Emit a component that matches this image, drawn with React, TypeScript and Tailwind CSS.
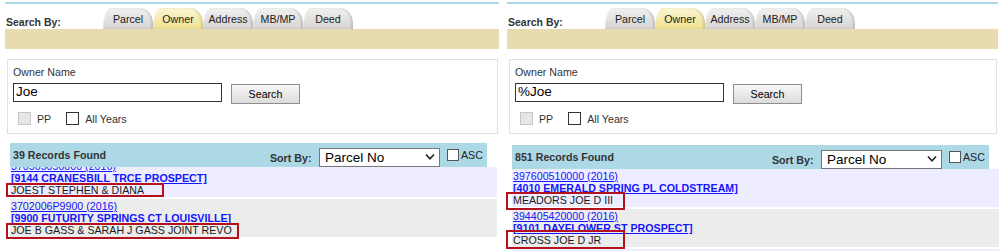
import React from 'react';

type Row = {
    parcel: string;
    address: string;
    owner: string;
    mark?: string;
};

const tabs = ['Parcel', 'Owner', 'Address', 'MB/MP', 'Deed'];

const leftRows: Row[] = [
    { parcel: '370505050000 (2016)', address: '[9144 CRANESBILL TRCE PROSPECT]', owner: 'JOEST STEPHEN & DIANA', mark: 'left-[-5px] top-[-1px] w-[158px] h-[14px]' },
    { parcel: '3702006P9900 (2016)', address: '[9900 FUTURITY SPRINGS CT LOUISVILLE]', owner: 'JOE B GASS & SARAH J GASS JOINT REVO', mark: 'left-[-5px] top-[-1px] w-[233px] h-[16px]' },
];

const rightRows: Row[] = [
    { parcel: '397600510000 (2016)', address: '[4010 EMERALD SPRING PL COLDSTREAM]', owner: 'MEADORS JOE D III', mark: 'left-[-7px] top-[-2px] w-[119px] h-[18px]' },
    { parcel: '394405420000 (2016)', address: '[9101 DAYFLOWER ST PROSPECT]', owner: 'CROSS JOE D JR', mark: 'left-[-7px] top-[-4px] w-[119px] h-[19px]' },
    { parcel: '394302170000 (2016)', address: '[9802 JOE RD LOUISVILLE]', owner: 'JOE SMITH' },
];

const Tab = ({ label, active }: { label: string; active: boolean }) => (
    <div
        className={
            'w-[50px] h-[21px] flex items-center justify-center text-[10.67px] text-[#222] rounded-tl-[8px_21px] rounded-tr-[13px_15px] shadow-[inset_-2px_0_2px_rgba(0,0,0,0.12)] ' +
            (active ? 'bg-linear-to-b from-[#fbf6d2] to-[#efe08f]' : 'bg-linear-to-b from-[#f1f1f0] to-[#d5d4d2]')
        }
    >
        {label}
    </div>
);

const ResultRow = ({ row, index }: { row: Row; index: number }) => (
    <div className={'pl-[1px] pt-[1px] pb-[1px] leading-[12px] text-[10.67px] border-b-2 border-white ' + (index % 2 === 0 ? 'bg-[#ededff]' : 'bg-[#ececec]')}>
        <div className="text-[#1515ff] underline whitespace-nowrap">{row.parcel}</div>
        <div className="text-[#1515ff] underline font-bold whitespace-nowrap">{row.address}</div>
        <div className="relative text-[#1a1a1a] whitespace-nowrap">
            {row.owner}
            {row.mark && <span className={'absolute border-2 border-[#b3121c] ' + row.mark} />}
        </div>
    </div>
);

const SearchPanel = ({
    width,
    query,
    count,
    rows,
    barGap,
    listClass,
    innerClass,
}: {
    width: string;
    query: string;
    count: string;
    rows: Row[];
    barGap: string;
    listClass: string;
    innerClass: string;
}) => (
    <div className={width}>
        <div className="mt-[2px] border-t-2 border-[#add8e6]" />

        {/* search by tabs */}
        <div className="flex items-end h-[25px]">
            <div className="w-[98px] pl-[1px] text-[10.5px] leading-[13px] font-bold text-[#333]">Search By:</div>
            {tabs.map((t) => (
                <Tab key={t} label={t} active={t === 'Owner'} />
            ))}
        </div>
        <div className="h-[20px] bg-[#e6dcb0]" />

        {/* owner form */}
        <div className="mt-[10px] ml-[2px] mr-[1px] border border-[#e2e2e2] pt-[6px] pl-[5px] pb-[8px] text-[10.67px] text-[#333]">
            <div className="leading-[12px]">Owner Name</div>
            <div className="flex items-start mt-[5px]">
                <input
                    defaultValue={query}
                    className="w-[209px] h-[19px] border border-[#333] px-[2px] text-[13.5px] text-black outline-none"
                />
                <button className="ml-[9px] mt-[1px] w-[69px] h-[20px] border border-[#8e8e8e] bg-linear-to-b from-[#f7f7f7] to-[#dcdcdc] text-[10.67px] text-black">
                    Search
                </button>
            </div>
            <div className="flex items-center mt-[8px] pl-[5px] h-[13px]">
                <input type="checkbox" disabled className="appearance-none m-0 w-[13px] h-[13px] border border-[#c6c6c6] bg-[#e6e6e6]" />
                <span className="ml-[6px]">PP</span>
                <input type="checkbox" className="appearance-none m-0 ml-[15px] w-[13px] h-[13px] border border-[#333] bg-white" />
                <span className="ml-[6px]">All Years</span>
            </div>
        </div>

        {/* results header */}
        <div className={'ml-[5px] w-[477px] h-[24px] bg-[#add8e6] flex items-center text-[10.67px] font-bold text-[#333] ' + barGap}>
            <span className="w-[260px] pl-[3px]">{count} Records Found</span>
            <span className="w-[49px] mt-[6px]">Sort By:</span>
            <div className="relative mt-[5px]">
                <select className="appearance-none w-[121px] h-[19px] border border-[#767676] bg-white pl-[5px] text-[13.5px] font-normal text-black leading-[17px] outline-none">
                    <option>Parcel No</option>
                </select>
                <svg className="absolute right-[5px] top-[5px] pointer-events-none" width="10" height="8" viewBox="0 0 10 8">
                    <path d="M1 1.5 L5 5.8 L9 1.5" fill="none" stroke="#222" strokeWidth="1.6" />
                </svg>
            </div>
            <input type="checkbox" className="appearance-none m-0 ml-[7px] w-[12px] h-[12px] border border-[#555] bg-white" />
            <span className="ml-[2px] text-[10.67px] font-normal text-[#222]">ASC</span>
        </div>

        {/* results list, wrapper widened so the red marks are not clipped */}
        <div className={'-ml-[5px] pl-[10px] w-[502px] overflow-hidden ' + listClass}>
            <div className={'w-[487px] ' + innerClass}>
                {rows.map((r, i) => (
                    <ResultRow key={r.parcel} row={r} index={i} />
                ))}
            </div>
        </div>
    </div>
);

export default function App() {
    return (
        <div className="h-[251px] w-[1005px] overflow-hidden bg-white font-['Liberation_Sans',Arial,sans-serif]">
            <div className="flex items-start pl-[5px] gap-[8px]">
                <SearchPanel
                    width="w-[494px]"
                    query="Joe"
                    count="39"
                    rows={leftRows}
                    barGap="mt-[9px]"
                    listClass="h-[80px]"
                    innerClass="-mt-[8px]"
                />
                <SearchPanel
                    width="w-[491px]"
                    query="%Joe"
                    count="851"
                    rows={rightRows}
                    barGap="mt-[11px]"
                    listClass="h-[90px]"
                    innerClass=""
                />
            </div>
        </div>
    );
}
